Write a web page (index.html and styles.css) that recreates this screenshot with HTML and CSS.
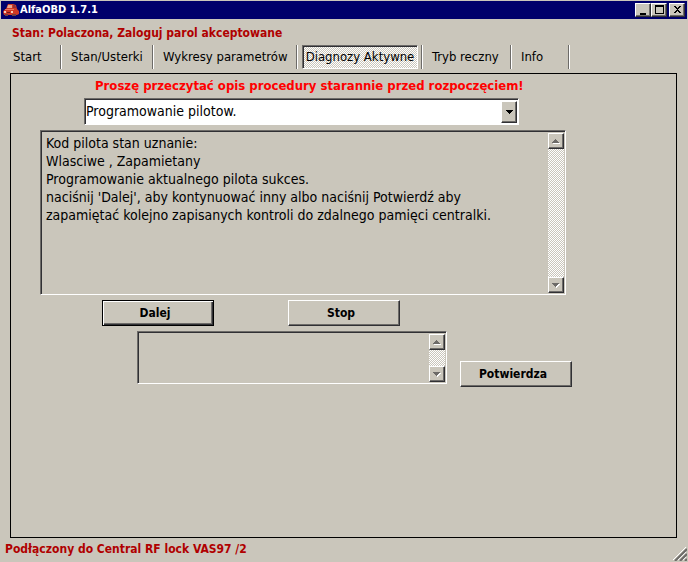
FILE: index.html
```html
<!DOCTYPE html>
<html lang="pl">
<head>
<meta charset="utf-8">
<title>AlfaOBD 1.7.1</title>
<link rel="stylesheet" href="styles.css">
</head>
<body>
<header class="titlebar">
  <svg class="app-icon" viewBox="0 0 16 14" aria-hidden="true">
    <path d="M5 1h5l3 1 1 4 2 2v3l-2 1H1L0 9l1-2 2-1z" fill="#d03a24"/>
    <path d="M5 2h4v3H4z" fill="#e8a890"/>
    <path d="M10 2h2l1 3h-3z" fill="#903038"/>
    <path d="M2 6h9v1H2z" fill="#f07860"/>
    <path d="M1 8h2v2H1zM8 8h2v2H8z" fill="#f8d0b8"/>
    <path d="M4 9h3v1H4z" fill="#701818"/>
    <path d="M2 11h3v2H2zM9 11h4v2H9z" fill="#704040"/>
  </svg>
  <h1 class="title">AlfaOBD 1.7.1</h1>
  <div class="window-buttons">
    <button class="key" aria-label="Minimalizuj"><svg viewBox="0 0 11 10"><path d="M2 8h6v2H2z"/></svg></button>
    <button class="key" aria-label="Maksymalizuj"><svg viewBox="0 0 11 10"><path d="M1 0h9v9H1zM2 2v6h7V2z" fill-rule="evenodd"/></svg></button>
    <button class="key close" aria-label="Zamknij"><svg viewBox="0 0 11 10"><path d="M2 1h2v1h1v1h1V2h1V1h2v1H8v1H7v1H6v1h1v1h1v1h1v1H7V7H6V6H5v1H4v1H2V7h1V6h1V5h1V4H4V3H3V2H2z"/></svg></button>
  </div>
</header>
<p class="state">Stan: Polaczona, Zaloguj parol akceptowane</p>
<nav class="tabs">
  <div class="cell"><button class="tab first">Start</button></div>
  <div class="cell"><button class="tab">Stan/Usterki</button></div>
  <div class="cell"><button class="tab">Wykresy parametrów</button></div>
  <div class="cell"><button class="tab active" aria-current="page">Diagnozy Aktywne</button></div>
  <div class="cell"><button class="tab">Tryb reczny</button></div>
  <div class="cell"><button class="tab">Info</button></div>
</nav>
<main class="panel">
  <div class="content">
    <label class="warning" for="procedure">Proszę przeczytać opis procedury starannie przed rozpoczęciem!</label>
    <div class="combo sunken">
      <select id="procedure"><option>Programowanie pilotow.</option></select>
      <span class="key combo-key"><svg viewBox="0 0 7 4"><path d="M0 0h7v1H6v1H5v1H4v1H3V3H2V2H1V1H0z"/></svg></span>
    </div>
    <div class="memo sunken">
      <textarea aria-label="Opis procedury" readonly>Kod pilota stan uznanie:
Wlasciwe , Zapamietany
Programowanie aktualnego pilota sukces.
naciśnij 'Dalej', aby kontynuować inny albo naciśnij Potwierdź aby
zapamiętać kolejno zapisanych kontroli do zdalnego pamięci centralki.</textarea>
      <div class="scrollbar">
        <button class="key" aria-label="W górę" disabled><svg viewBox="0 0 8 5"><path class="glint" d="M1 4h7v1H1z"/><path class="arrow" d="M3 0h1v1h1v1h1v1h1v1H0V3h1V2h1V1h1z"/></svg></button>
        <button class="key" aria-label="W dół" disabled><svg viewBox="0 0 8 5"><path class="glint" d="M7 1h1v1H7v1H6v1H5v1H4V1z"/><path class="arrow" d="M0 0h7v1H6v1H5v1H4v1H3V3H2V2H1V1H0z"/></svg></button>
      </div>
    </div>
    <div class="actions">
      <button class="command default">Dalej</button>
      <button class="command">Stop</button>
    </div>
    <div class="confirm">
      <div class="memo small sunken">
        <textarea aria-label="Dane" readonly></textarea>
        <div class="scrollbar">
          <button class="key" aria-label="W górę" disabled><svg viewBox="0 0 8 5"><path class="glint" d="M1 4h7v1H1z"/><path class="arrow" d="M3 0h1v1h1v1h1v1h1v1H0V3h1V2h1V1h1z"/></svg></button>
          <button class="key" aria-label="W dół" disabled><svg viewBox="0 0 8 5"><path class="glint" d="M7 1h1v1H7v1H6v1H5v1H4V1z"/><path class="arrow" d="M0 0h7v1H6v1H5v1H4v1H3V3H2V2H1V1H0z"/></svg></button>
        </div>
      </div>
      <button class="command">Potwierdza</button>
    </div>
  </div>
</main>
<footer class="status">
  <span>Podłączony do Central RF lock VAS97 /2</span>
  <svg class="grip" viewBox="0 0 14 14" aria-hidden="true">
    <path d="M0 13L13 0M5 13l8-8M10 13l3-3" class="grip-light"/>
    <path d="M2 14L14 2M7 14l7-7M12 14l2-2" class="grip-dark"/>
  </svg>
</footer>
</body>
</html>
```

FILE: styles.css
```css
:root {
  --face: #cac6bb;
  --shadow: #6d6b68;
  --dark: #303034;
  --navy: #00006b;
  --red: #b00000;
  --dither: repeating-conic-gradient(#fff 0 25%, var(--face) 0 50%) 0 0 / 2px 2px;
}

* { box-sizing: border-box; }

body {
  margin: 0;
  min-height: 100vh;
  display: flex;
  flex-direction: column;
  border: 1px solid var(--face);
  background: var(--face);
  color: #000;
  font: 14px/18px "DejaVu Sans Condensed", "DejaVu Sans", sans-serif;
}

button, select, textarea {
  margin: 0;
  padding: 0;
  border: 0;
  border-radius: 0;
  background: none;
  color: inherit;
  font: inherit;
}

svg { display: block; }

.titlebar {
  display: flex;
  align-items: center;
  height: 18px;
  padding: 0 2px;
  background: var(--navy);
  color: #fff;
}

.app-icon { width: 16px; height: 14px; }

.title {
  flex: 1;
  margin: 0 0 0 1px;
  font-size: 11px;
  line-height: 18px;
}

.window-buttons { display: flex; }

.key {
  display: flex;
  align-items: center;
  justify-content: center;
  width: 16px;
  height: 16px;
  background: var(--face);
  border: 1px solid;
  border-color: #fff var(--dark) var(--dark) #fff;
  box-shadow: inset -1px -1px var(--shadow);
}

.window-buttons .key { height: 14px; color: #000; }
.window-buttons svg { width: 11px; height: 10px; }
.window-buttons .close { margin-left: 2px; }

.state {
  margin: 5px 11px 3px;
  color: var(--red);
  font-size: 12px;
  font-weight: bold;
}

.tabs {
  display: grid;
  grid-template-columns: 61px 92px 144px 125px 89px 58px;
  font-size: 13px;
}

.cell {
  display: flex;
  height: 24px;
  border-right: 1px solid #fff;
  box-shadow: inset -1px 0 var(--shadow);
}

.tab {
  padding: 0 0 0 9px;
  white-space: nowrap;
}

.first { padding-left: 12px; }

.active {
  flex: 1;
  margin: 0 4px;
  padding: 0;
  border: 1px solid;
  border-color: var(--shadow) #fff #fff var(--shadow);
  box-shadow: inset 1px 1px var(--dark);
  background: var(--dither);
}

.panel {
  flex: 1;
  margin: 4px 10px 0 9px;
  border: 1px solid #000;
}

.content {
  display: flex;
  flex-direction: column;
  padding: 3px 110px 0 29px;
}

.warning {
  align-self: flex-start;
  margin-left: 55px;
  color: #f00;
  font-size: 13px;
  font-weight: bold;
}

.sunken {
  border: 1px solid;
  border-color: var(--shadow) #fff #fff var(--shadow);
  box-shadow: inset 1px 1px var(--dark);
}

.combo {
  display: flex;
  position: relative;
  height: 27px;
  margin: 3px 47px 5px 44px;
  padding: 2px 2px 4px 1px;
  background: #fff;
}

.combo select {
  flex: 1;
  appearance: none;
}

.combo-key {
  position: absolute;
  top: 2px;
  right: 1px;
  bottom: 1px;
  height: auto;
  pointer-events: none;
}

.combo-key svg { width: 7px; height: 4px; }

.memo {
  display: flex;
  height: 165px;
  padding: 2px 1px 1px 2px;
}

.memo textarea {
  flex: 1;
  min-width: 0;
  padding: 1px 3px;
  resize: none;
  overflow: hidden;
}

.scrollbar {
  display: flex;
  flex-direction: column;
  justify-content: space-between;
  background: var(--dither);
}

.scrollbar svg { width: 8px; height: 5px; }
.arrow { fill: var(--shadow); }
.glint { fill: #fff; }

.actions {
  display: flex;
  gap: 74px;
  margin: 5px 0 5px 62px;
}

.command {
  flex: none;
  width: 112px;
  height: 26px;
  padding-right: 6px;
  border: 1px solid;
  border-color: #fff var(--dark) var(--dark) #fff;
  box-shadow: inset -1px -1px var(--shadow);
  font-size: 12px;
  font-weight: bold;
}

.default {
  border-color: #000;
  box-shadow: inset 1px 1px #fff, inset -1px -1px var(--dark), inset -2px -2px var(--shadow);
}

.confirm {
  display: flex;
  align-items: flex-end;
  gap: 13px;
  margin-left: 97px;
}

.small {
  flex: none;
  width: 310px;
  height: 53px;
  margin-bottom: 3px;
}

.status {
  display: flex;
  justify-content: space-between;
  align-items: flex-end;
  padding: 2px 0 3px 4px;
  color: var(--red);
  font-size: 12px;
  font-weight: bold;
}

.grip { width: 14px; height: 14px; margin-bottom: -3px; }
.grip path { fill: none; }
.grip-light { stroke: #fff; }
.grip-dark { stroke: var(--shadow); stroke-width: 2; }
```
